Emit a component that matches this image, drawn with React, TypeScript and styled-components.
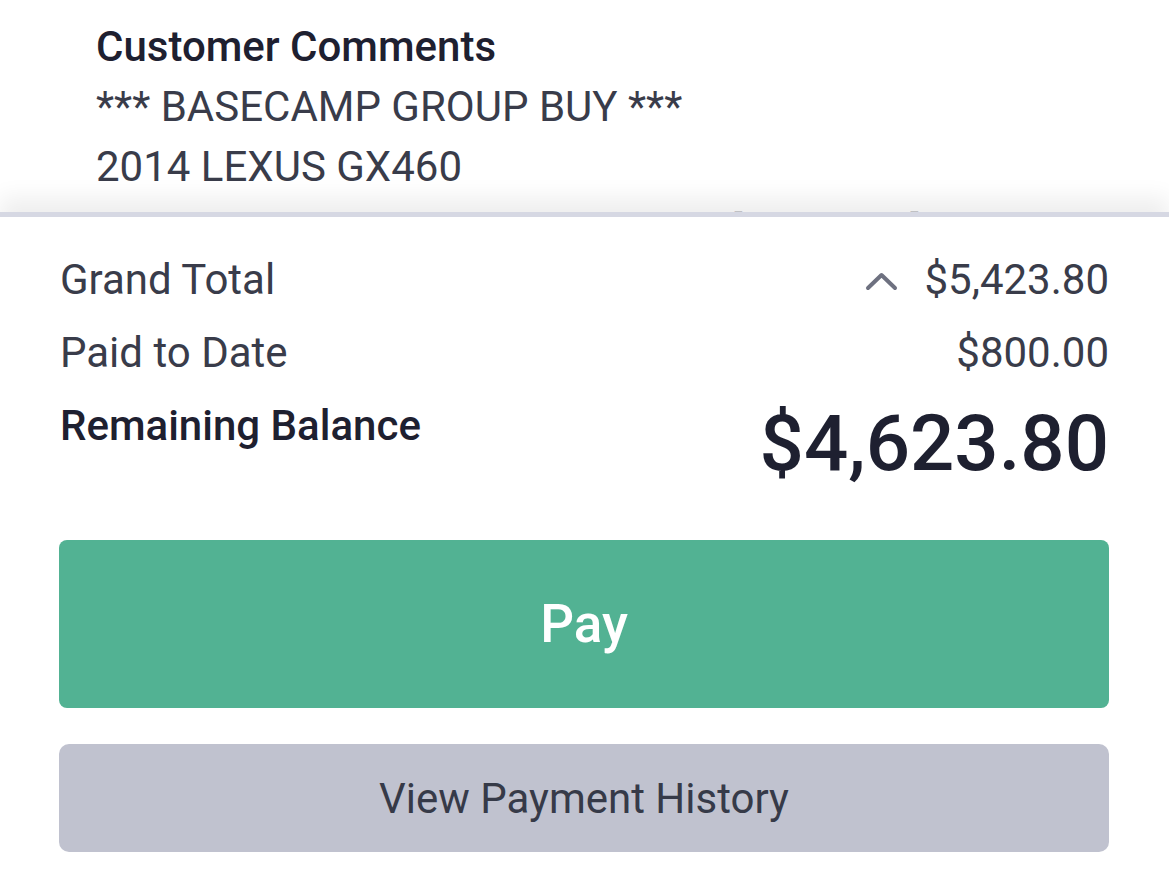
import React from 'react'
import styled, { createGlobalStyle } from 'styled-components'

const GlobalStyle = createGlobalStyle`
  html, body {
    margin: 0;
    padding: 0;
    background: #ffffff;
  }
  body {
    font-family: Roboto, "Noto Sans", "Liberation Sans", sans-serif;
  }
`

const Screen = styled.div`
  width: 1169px;
  height: 888px;
  display: flex;
  flex-direction: column;
  overflow: hidden;
  background: #ffffff;
`

const Comments = styled.section`
  height: 212px;
  flex-shrink: 0;
  overflow: hidden;
  padding: 17px 96px 0;
  box-sizing: border-box;
`

const CommentsTitle = styled.div`
  font-size: 42px;
  line-height: 60px;
  font-weight: 500;
  color: #1e2030;
`

const CommentLine = styled.div<{ $peek?: boolean }>`
  font-size: 42px;
  line-height: 60px;
  font-weight: 400;
  color: #393c4a;
  white-space: nowrap;
  margin-top: ${p => (p.$peek ? '5px' : '0')};
`

const Sheet = styled.section`
  position: relative;
  flex: 1;
  display: flex;
  flex-direction: column;
  padding: 26px 60px 0 59px;
  border-top: 5px solid #d6d8e3;
  box-shadow: 0 -14px 22px rgba(0, 0, 0, 0.07);
  background: #ffffff;
`

const Row = styled.div`
  display: flex;
  align-items: center;
  justify-content: space-between;
  height: 73px;
`

const BalanceRow = styled.div`
  display: flex;
  align-items: flex-start;
  justify-content: space-between;
`

const Label = styled.span<{ $strong?: boolean }>`
  font-size: 42px;
  line-height: 73px;
  font-weight: ${p => (p.$strong ? 500 : 400)};
  color: ${p => (p.$strong ? '#1e2030' : '#393c4a')};
  padding-left: 1px;
`

const Amount = styled.span`
  display: flex;
  align-items: center;
  gap: 26px;
  font-size: 42px;
  line-height: 73px;
  color: #393c4a;
`

const BigAmount = styled.span`
  font-size: 78px;
  line-height: 110px;
  font-weight: 500;
  color: #1e2030;
`

const Chevron = styled.svg`
  width: 33px;
  height: 20px;
  margin-top: 2px;
`

const PayButton = styled.button`
  margin-top: 41px;
  height: 168px;
  width: 100%;
  border: none;
  border-radius: 8px;
  background: #52b293;
  color: #ffffff;
  font-family: inherit;
  font-size: 53px;
  font-weight: 500;
  cursor: pointer;
`

const HistoryButton = styled.button`
  margin-top: 36px;
  height: 108px;
  width: 100%;
  border: none;
  border-radius: 10px;
  background: #c0c2cf;
  color: #363a48;
  font-family: inherit;
  font-size: 42px;
  font-weight: 400;
  cursor: pointer;
`

const App = () => {
  return (
    <Screen>
      <GlobalStyle />
      <Comments>
        <CommentsTitle>Customer Comments</CommentsTitle>
        <CommentLine>*** BASECAMP GROUP BUY ***</CommentLine>
        <CommentLine>2014 LEXUS GX460</CommentLine>
        <CommentLine $peek>ARB BUMPER - REAR SWING OUT [DEPOSIT]</CommentLine>
      </Comments>
      <Sheet>
        <Row>
          <Label>Grand Total</Label>
          <Amount>
            <Chevron viewBox="0 0 33 20">
              <polyline
                points="3,17 16.5,4 30,17"
                fill="none"
                stroke="#6e7180"
                strokeWidth="4"
                strokeLinecap="round"
                strokeLinejoin="round"
              />
            </Chevron>
            $5,423.80
          </Amount>
        </Row>
        <Row>
          <Label>Paid to Date</Label>
          <Amount>$800.00</Amount>
        </Row>
        <BalanceRow>
          <Label $strong>Remaining Balance</Label>
          <BigAmount>$4,623.80</BigAmount>
        </BalanceRow>
        <PayButton>Pay</PayButton>
        <HistoryButton>View Payment History</HistoryButton>
      </Sheet>
    </Screen>
  )
}

export default App
